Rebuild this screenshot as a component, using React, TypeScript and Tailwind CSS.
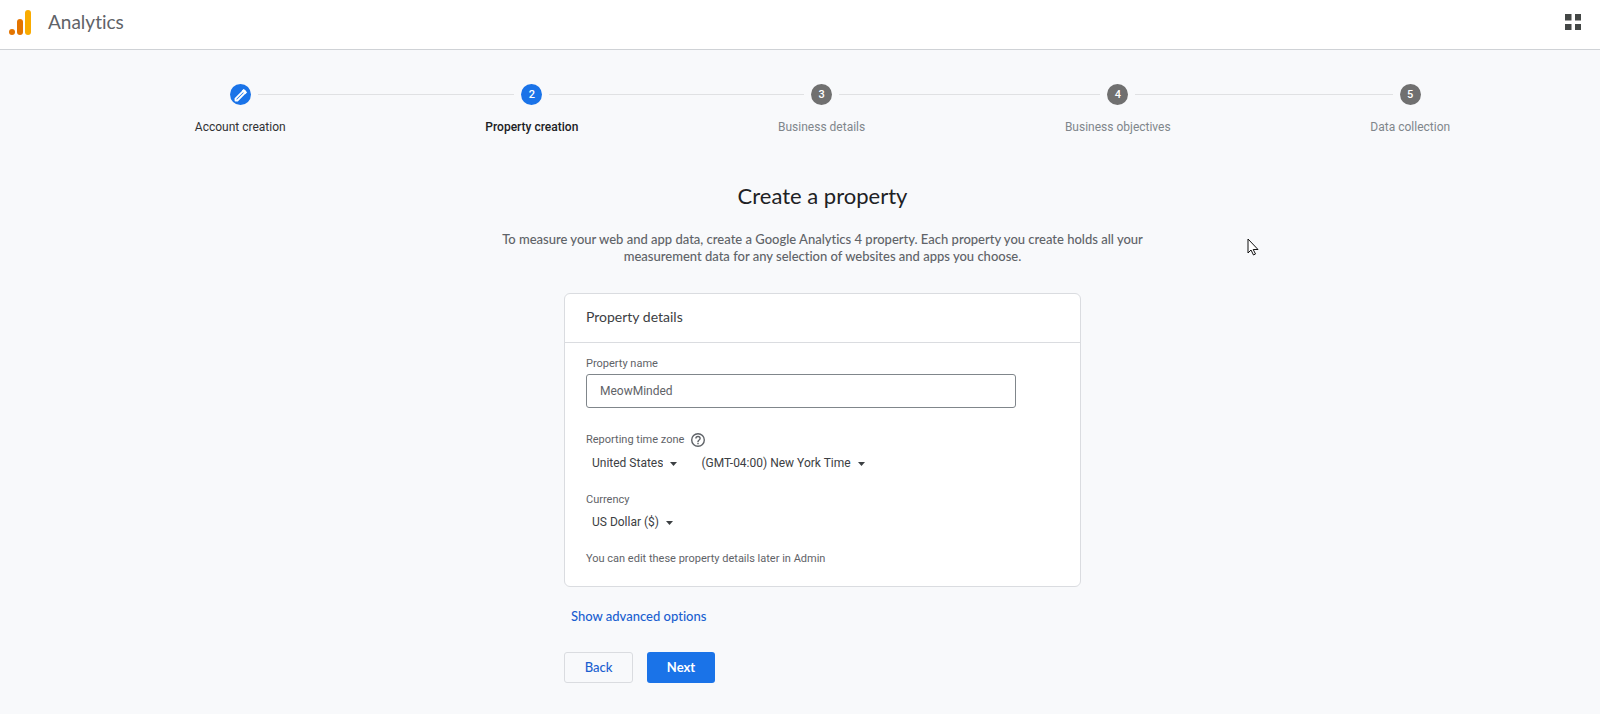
import { useState } from "react";
import clsx from "clsx";

type StepStatus = "done" | "current" | "upcoming";

interface Step {
  label: string;
  status: StepStatus;
}

const STEPS: Step[] = [
  { label: "Account creation", status: "done" },
  { label: "Property creation", status: "current" },
  { label: "Business details", status: "upcoming" },
  { label: "Business objectives", status: "upcoming" },
  { label: "Data collection", status: "upcoming" },
];

function AnalyticsLogo() {
  return (
    <svg width="24" height="28" viewBox="0 0 24 28" aria-hidden="true">
      <rect x="16" y="1" width="6" height="25" rx="3" fill="#f9ab00" />
      <rect x="8" y="10" width="6" height="16" rx="3" fill="#e37400" />
      <circle cx="3" cy="23" r="3" fill="#e37400" />
    </svg>
  );
}

function Header() {
  return (
    <header className="flex h-[50px] items-center border-b border-[#cfd2d6] bg-white pr-[18px] pb-1 pl-[9px]">
      <AnalyticsLogo />
      <span className="ml-[15px] font-['Lato',sans-serif] text-[19px] text-[#5f6368]">Analytics</span>
      <button type="button" aria-label="Apps" className="ml-auto text-[#444746]">
        <svg width="18" height="18" viewBox="0 0 18 18" fill="currentColor" className="block">
          <rect x="1" y="0" width="6.500" height="6.500" />
          <rect x="11" y="0" width="6" height="6.500" />
          <rect x="1" y="10" width="6.500" height="6" />
          <rect x="11" y="10" width="6" height="6" />
        </svg>
      </button>
    </header>
  );
}

function Stepper() {
  return (
    <ol className="flex px-[50px]">
      {STEPS.map((step, index) => (
        <li
          key={step.label}
          aria-current={step.status === "current" ? "step" : undefined}
          className="flex grow flex-col items-center"
        >
          <div className="flex w-full items-center gap-[7px]">
            <span className={clsx("h-px flex-1", index > 0 && "bg-[#e0e1e3]")} />
            <span
              className={clsx(
                "flex size-[21px] items-center justify-center rounded-full pt-px text-[11px] leading-5 font-medium text-white",
                step.status === "upcoming" ? "bg-[#707070]" : "bg-[#1a73e8]"
              )}
            >
              {step.status === "done" ? (
                <svg width="15" height="15" viewBox="0 0 24 24" fill="none" aria-hidden="true">
                  <path
                    d="M4 20v-3L16.500 4.500a1.500 1.500 0 0 1 2 0l1 1a1.500 1.500 0 0 1 0 2L7 20z"
                    stroke="currentColor"
                    strokeWidth="3"
                    strokeLinejoin="round"
                  />
                  <path d="M14 4.500L19.500 10l3-3L17 1.500z" fill="currentColor" />
                </svg>
              ) : (
                index + 1
              )}
            </span>
            <span className={clsx("h-px flex-1", index < STEPS.length - 1 && "bg-[#e0e1e3]")} />
          </div>
          <span
            className={clsx(
              "mt-[14px] text-[12px] leading-4",
              step.status === "done" && "text-[#303134]",
              step.status === "current" && "font-medium text-[#202124]",
              step.status === "upcoming" && "text-[#80868b]"
            )}
          >
            {step.label}
          </span>
        </li>
      ))}
    </ol>
  );
}

function SelectField({ id, label, options }: { id: string; label?: string; options: string[] }) {
  return (
    <div className="relative flex items-center">
      <select
        id={id}
        aria-label={label}
        className="field-sizing-content appearance-none bg-transparent pr-[14px] text-[12px] leading-4 text-[#3c4043]"
      >
        {options.map((option) => (
          <option key={option}>{option}</option>
        ))}
      </select>
      <svg
        width="7"
        height="6"
        viewBox="0 0 7 6"
        fill="#3c4043"
        className="pointer-events-none absolute right-0"
        aria-hidden="true"
      >
        <path d="M0 2h7L3.500 6z" />
      </svg>
    </div>
  );
}

function PropertyCard() {
  const [name, setName] = useState("MeowMinded");

  return (
    <section className="mt-7 rounded-md border border-[#dadce0] bg-white">
      <h2 className="border-b border-[#dadce0] px-[21px] pt-[13px] pb-[15px] font-['Lato',sans-serif] text-[14px] leading-5 text-[#3c4043]">
        Property details
      </h2>
      <div className="px-[21px] pt-[13px] pb-[19px] text-[11px] leading-4 text-[#5f6368]">
        <label htmlFor="property-name" className="block">
          Property name
        </label>
        <input
          id="property-name"
          type="text"
          value={name}
          onChange={(event) => setName(event.target.value)}
          className="mt-[2px] block h-[34px] w-[430px] max-w-full rounded-[3px] border border-[#80868b] px-[13px] text-[12px] text-[#5f6368]"
        />

        <div className="mt-6 flex items-center gap-[7px]">
          <span>Reporting time zone</span>
          <button type="button" aria-label="About time zones">
            <svg width="14" height="14" viewBox="0 0 20 20" fill="#5f6368" className="block">
              <path d="M9 16h2v-2H9v2zm1-16a10 10 0 1 0 0 20 10 10 0 0 0 0-20zm0 18a8 8 0 1 1 0-16 8 8 0 0 1 0 16zm0-14a4 4 0 0 0-4 4h2a2 2 0 1 1 4 0c0 2-3 1.750-3 5h2c0-2.250 3-2.500 3-5a4 4 0 0 0-4-4z" />
            </svg>
          </button>
        </div>
        <div className="mt-[7px] flex gap-6 px-[6px]">
          <SelectField id="country" label="Country" options={["United States"]} />
          <SelectField id="time-zone" label="Time zone" options={["(GMT-04:00) New York Time"]} />
        </div>

        <label htmlFor="currency" className="mt-[21px] block">
          Currency
        </label>
        <div className="mt-[6px] flex px-[6px]">
          <SelectField id="currency" options={["US Dollar ($)"]} />
        </div>

        <p className="mt-[21px]">You can edit these property details later in Admin</p>
      </div>
    </section>
  );
}

export default function App() {
  return (
    <div className="flex min-h-screen flex-col bg-[#f8f9fb] font-['Roboto',sans-serif] [font-variant-ligatures:none]">
      <Header />
      <main className="grow pt-[34px] pb-[30px] pl-[45px]">
        <Stepper />
        <div className="mx-auto mt-[47px] max-w-[670px] text-center font-['Lato',sans-serif]">
          <h1 className="text-[22px] leading-7 text-[#202124]">Create a property</h1>
          <p className="mt-[21px] text-[13px] leading-[17px] font-medium text-[#5f6368]">
            To measure your web and app data, create a Google Analytics 4 property. Each property you create holds all your
            measurement data for any selection of websites and apps you choose.
          </p>
        </div>
        <div className="mx-auto max-w-[517px]">
          <PropertyCard />
          <button
            type="button"
            className="mt-[19px] ml-[7px] block font-['Lato',sans-serif] text-[13px] leading-5 font-medium text-[#1a5fd0]"
          >
            Show advanced options
          </button>
          <div className="mt-[26px] flex gap-[14px] font-['Lato',sans-serif] text-[13px]">
            <button type="button" className="h-[31px] w-[69px] rounded-[3px] border border-[#dadce0] font-medium text-[#1a5fd0]">
              Back
            </button>
            <button type="button" className="h-[31px] w-[68px] rounded-[3px] bg-[#1a73e8] font-bold text-white">
              Next
            </button>
          </div>
        </div>
      </main>
      <svg
        width="12"
        height="18"
        viewBox="0 0 12 18"
        className="pointer-events-none absolute top-[238px] left-[1247px]"
        aria-hidden="true"
      >
        <path d="M1 1v14l3-3 2.500 5 2-1-2.300-4.500H11z" fill="#fff" stroke="#111" strokeWidth="1" />
      </svg>
    </div>
  );
}
